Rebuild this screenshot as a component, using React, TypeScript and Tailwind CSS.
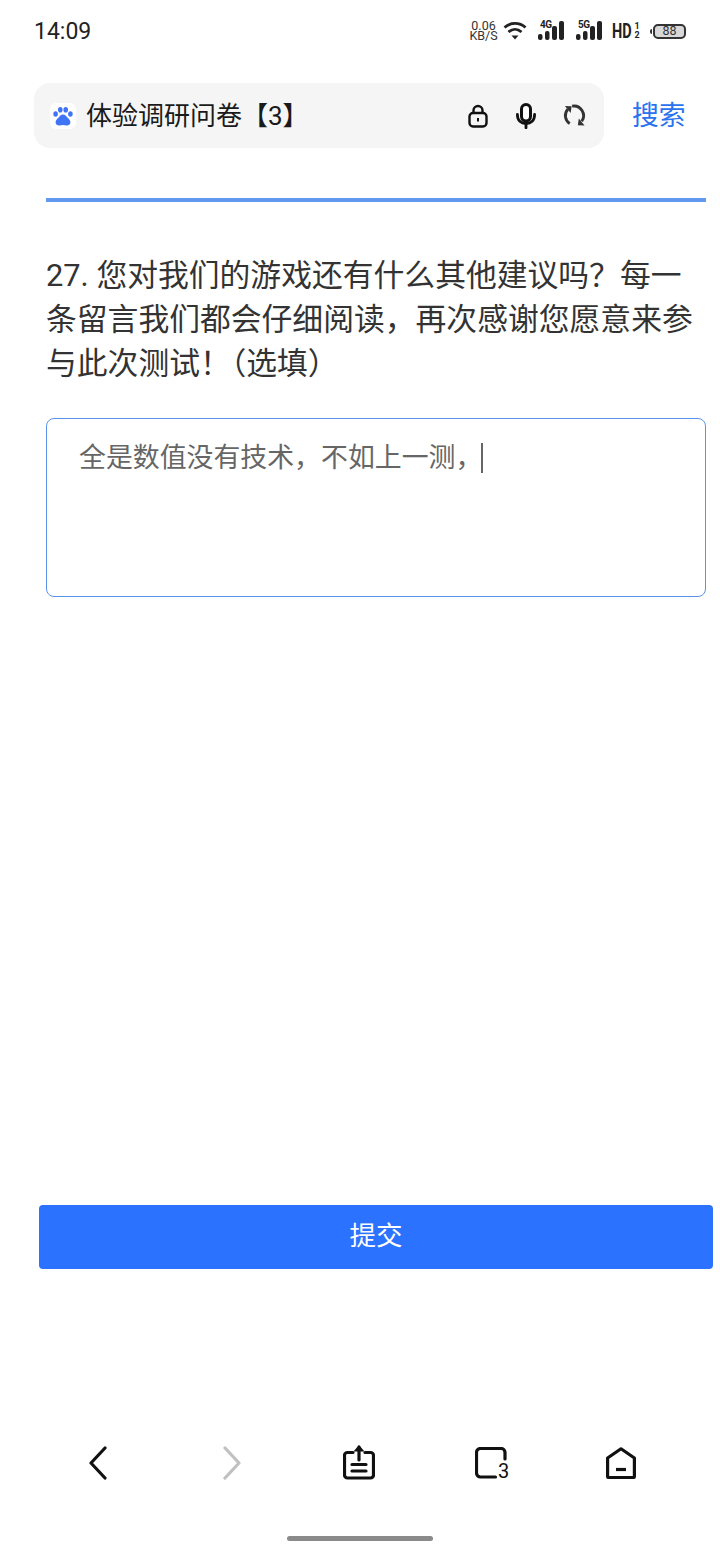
function Signal({ label }: { label: string }) {
  return (
    <div className="relative w-[26px] h-[22px]">
      <span className="absolute left-[2px] top-[-1px] text-[10px] leading-[11px] font-bold text-[#222] tracking-[-0.5px]">{label}</span>
      <svg width="26" height="22" viewBox="0 0 26 22" className="absolute left-0 top-0">
        <g fill="#222">
          <rect x="0" y="14" width="4.500" height="6" rx="2" />
          <rect x="7" y="11" width="4.500" height="9" rx="2" />
          <rect x="14" y="6" width="5" height="14" rx="2" />
          <rect x="21" y="1" width="5" height="19" rx="2" />
        </g>
      </svg>
    </div>
  );
}

function StatusBar() {
  return (
    <div className="flex h-[62px] items-center justify-between pl-[34px] pr-[34px]">
      <span className="pt-[2px] text-[23px] text-[#222]">14:09</span>
      <div className="flex items-center">
        <div className="ml-[1px] w-[29px] whitespace-pre-line text-center text-[12.500px] leading-[10px] text-[#333]">{"0.06\nKB/S"}</div>
        <svg width="24" height="20" viewBox="0 0 24 20" className="ml-[5px] mb-[1px]">
          <g fill="none" stroke="#222" strokeWidth="2.800">
            <path d="M1.500 6.500C7.500 1 16.500 1 22.500 6.500" />
            <path d="M5.500 11c4-3.600 9-3.600 13 0" />
          </g>
          <path d="M8.500 14.500h7L12 18.500z" fill="#222" />
        </svg>
        <div className="ml-[11px]"><Signal label="4G" /></div>
        <div className="ml-[12px]"><Signal label="5G" /></div>
        <div className="ml-[10px] flex items-center">
          <span className="w-[21px] origin-left scale-x-[0.69] text-[21px] leading-[22px] font-bold text-[#222]">HD</span>
          <div className="ml-[1px] flex w-[6px] flex-col items-center text-[9px] leading-[9px] font-bold text-[#222]">
            <span>1</span>
            <span>2</span>
          </div>
        </div>
        <div className="ml-[10px] flex items-center">
          <span className="mr-[1px] h-[5px] w-[2px] rounded-l-sm bg-[#333]" />
          <div className="flex h-[15px] w-[33px] items-center justify-center rounded-[5px] border-2 border-[#333] bg-[#d8d8d8] text-[12.500px] leading-none text-[#333]">88</div>
        </div>
      </div>
    </div>
  );
}

function Paw() {
  return (
    <svg width="26" height="26" viewBox="0 0 26 26">
      <rect width="26" height="26" rx="6" fill="#fff" />
      <g fill="#3f74f6">
        <ellipse cx="5.600" cy="11" rx="2.300" ry="2.700" />
        <ellipse cx="10.300" cy="6.700" rx="2.300" ry="2.800" />
        <ellipse cx="15.700" cy="6.700" rx="2.300" ry="2.800" />
        <ellipse cx="20.400" cy="11" rx="2.300" ry="2.700" />
        <path d="M13 11.500c2.200 0 3.200 1.600 4.400 3 1.400 1.500 3.100 2.800 3 5-.1 2.300-2.100 3.200-4 3-1.300-.1-2.200-.5-3.400-.5s-2.100.4-3.400.5c-1.900.2-3.900-.7-4-3-.1-2.200 1.600-3.500 3-5 1.200-1.400 2.200-3 4.400-3z" />
      </g>
    </svg>
  );
}

function SearchBar() {
  return (
    <div className="mt-[21px] flex items-center pl-[34px]">
      <div className="flex h-[65px] w-[570px] items-center rounded-[16px] bg-[#f5f5f5] pl-[16px]">
        <Paw />
        <span className="ml-[10px] flex-1 text-[26px] leading-none text-[#1a1a1a]">体验调研问卷【3】</span>
        <svg width="20" height="24" viewBox="0 0 20 24" className="mr-[28px]" fill="none" stroke="#111" strokeWidth="2.400">
          <rect x="1.500" y="9" width="17" height="13.500" rx="3.500" />
          <path d="M5.500 9V6.500a4.500 4.500 0 0 1 9 0V9" />
          <rect x="9" y="14" width="2" height="3.500" fill="#111" stroke="none" />
        </svg>
        <svg width="20" height="26" viewBox="0 0 20 26" className="mr-[27px]" fill="none" stroke="#111" strokeLinecap="round">
          <rect x="5.500" y="1.500" width="9" height="16.500" rx="4.500" strokeWidth="3" fill="#fff" />
          <path d="M1.400 11.500c0 6 3.600 9 8.600 9s8.600-3 8.600-9" strokeWidth="2.800" />
          <path d="M10 20.500v4.300" strokeWidth="2.800" />
        </svg>
        <svg width="23" height="23" viewBox="0 0 24 24" className="mr-[18px]" fill="none" stroke="#333" strokeWidth="3">
          <path d="M7 20.500A10 10 0 0 1 5 5.500" />
          <path d="M9.500 2.300A10 10 0 0 1 19.500 18" />
          <path d="M2 2l7 .3-1 7z" fill="#333" stroke="none" />
          <path d="M22.500 22.500l-7-.3 1-7z" fill="#333" stroke="none" />
        </svg>
      </div>
      <span className="ml-[28px] pt-[2px] text-[26.800px] leading-none text-[#2a72ee]">搜索</span>
    </div>
  );
}

function Question() {
  return (
    <div className="pl-[46px]">
      <div className="mt-[50px] h-[4px] w-[660px] bg-[#6398f0]" />
      <p className="mt-[52px] w-[660px] text-[30.800px] leading-[44px] text-[#333]">
        <span className="block">27. 您对我们的游戏还有什么其他建议吗？每一条留言我们都会仔细阅读，再次感谢您愿意来参</span>
        与此次测试<span className="[font-feature-settings:'halt']">！</span>（选填）
      </p>
      <div className="mt-[32px] h-[179px] w-[660px] rounded-[8px] border border-[#5a92ea] pl-[32px] pt-[18px] text-[26.900px] leading-[36px] text-[#666]">
        全是数值没有技术，不如上一测，<span className="ml-[-1px] inline-block h-[30px] w-[2px] translate-y-[6px] bg-[#666]" />
      </div>
    </div>
  );
}

function BottomNav() {
  return (
    <div className="mt-[174px] flex h-[40px] items-center pl-[88px]">
      <svg width="20" height="34" viewBox="0 0 20 34" fill="none" stroke="#111" strokeWidth="3.200" strokeLinecap="round" strokeLinejoin="round">
        <path d="M17 2L3 17l14 15" />
      </svg>
      <svg width="20" height="34" viewBox="0 0 20 34" className="ml-[114px]" fill="none" stroke="#c0c0c0" strokeWidth="3.200" strokeLinecap="round" strokeLinejoin="round">
        <path d="M3 2l14 15L3 32" />
      </svg>
      <svg width="32" height="36" viewBox="0 0 32 36" className="ml-[101px] mb-[2px]" fill="none" stroke="#111" strokeWidth="3.200" strokeLinecap="round" strokeLinejoin="round">
        <path d="M10 8.500H4.500a3 3 0 0 0-3 3V31a3 3 0 0 0 3 3h23a3 3 0 0 0 3-3V11.500a3 3 0 0 0-3-3H22" />
        <path d="M16 16V3" />
        <path d="M10.500 7.500L16 1l5.500 6.500z" fill="#111" stroke="none" />
        <path d="M9 20.500h14M9 27h14" />
      </svg>
      <div className="relative ml-[100px] h-[32px] w-[34px]">
        <svg width="34" height="32" viewBox="0 0 34 32" fill="none" stroke="#111" strokeWidth="3.200" strokeLinecap="round" strokeLinejoin="round">
          <path d="M30 12V5.500a4 4 0 0 0-4-4H5.500a4 4 0 0 0-4 4V26a4 4 0 0 0 4 4h15" />
        </svg>
        <span className="absolute left-[23px] top-[14px] text-[20px] leading-[20px] text-[#111]">3</span>
      </div>
      <svg width="30" height="32" viewBox="0 0 30 32" className="ml-[97px]" fill="none" stroke="#111" strokeWidth="3.200" strokeLinejoin="round">
        <path d="M15 1.800L28.400 11v18.500a1 1 0 0 1-1 1H2.600a1 1 0 0 1-1-1V11z" />
        <path d="M10 22.500h10" />
      </svg>
    </div>
  );
}

export default function App() {
  return (
    <div className="h-[1560px] w-[720px] overflow-hidden bg-white font-['Roboto','Noto_Sans_CJK_SC',sans-serif]">
      <StatusBar />
      <SearchBar />
      <Question />
      <div className="mt-[608px] pl-[39px]">
        <button className="h-[64px] w-[674px] rounded-[4px] bg-[#2a72ff] pb-[2px] text-[26.500px] text-white">提交</button>
      </div>
      <BottomNav />
      <div className="mt-[53px] flex justify-center">
        <div className="h-[5px] w-[146px] rounded-full bg-[#8a8a8a]" />
      </div>
    </div>
  );
}
